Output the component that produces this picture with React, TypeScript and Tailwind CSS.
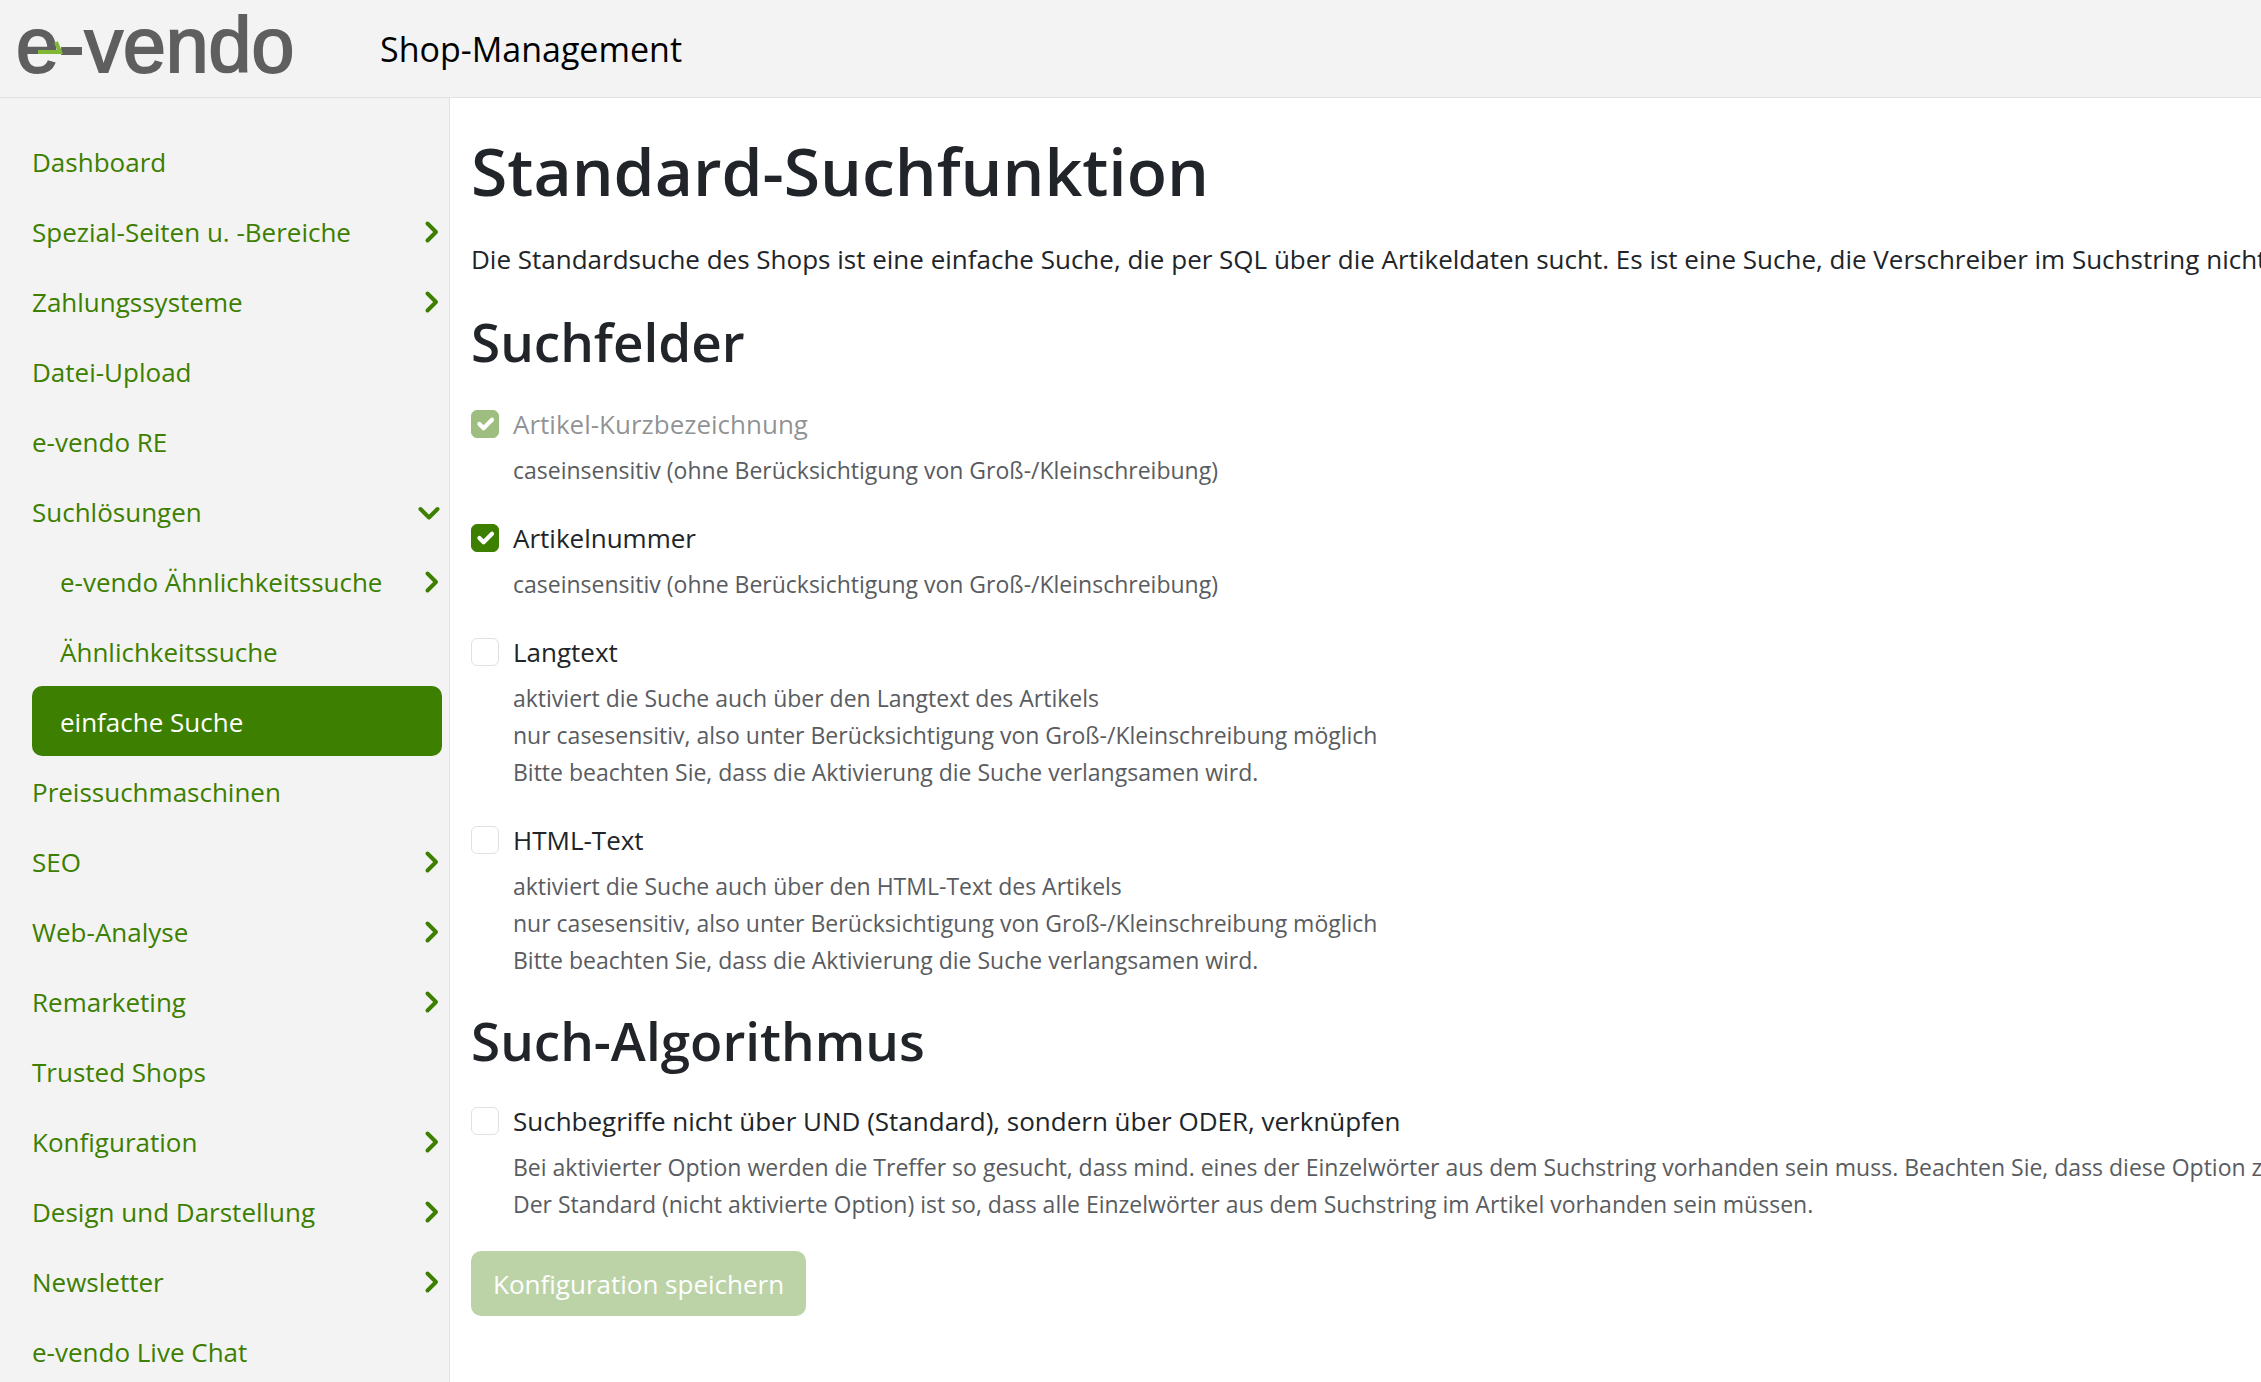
import React, { useState } from "react";

interface NavItem {
  label: string;
  arrow?: "right" | "down";
  sub?: boolean;
  active?: boolean;
}

interface Option {
  id: string;
  label: string;
  help: string[];
  disabled?: boolean;
}

const navItems: NavItem[] = [
  { label: "Dashboard" },
  { label: "Spezial-Seiten u. -Bereiche", arrow: "right" },
  { label: "Zahlungssysteme", arrow: "right" },
  { label: "Datei-Upload" },
  { label: "e-vendo RE" },
  { label: "Suchlösungen", arrow: "down" },
  { label: "e-vendo Ähnlichkeitssuche", arrow: "right", sub: true },
  { label: "Ähnlichkeitssuche", sub: true },
  { label: "einfache Suche", sub: true, active: true },
  { label: "Preissuchmaschinen" },
  { label: "SEO", arrow: "right" },
  { label: "Web-Analyse", arrow: "right" },
  { label: "Remarketing", arrow: "right" },
  { label: "Trusted Shops" },
  { label: "Konfiguration", arrow: "right" },
  { label: "Design und Darstellung", arrow: "right" },
  { label: "Newsletter", arrow: "right" },
  { label: "e-vendo Live Chat" },
];

const searchFields: Option[] = [
  {
    id: "short-name",
    label: "Artikel-Kurzbezeichnung",
    help: ["caseinsensitiv (ohne Berücksichtigung von Groß-/Kleinschreibung)"],
    disabled: true,
  },
  {
    id: "article-number",
    label: "Artikelnummer",
    help: ["caseinsensitiv (ohne Berücksichtigung von Groß-/Kleinschreibung)"],
  },
  {
    id: "long-text",
    label: "Langtext",
    help: [
      "aktiviert die Suche auch über den Langtext des Artikels",
      "nur casesensitiv, also unter Berücksichtigung von Groß-/Kleinschreibung möglich",
      "Bitte beachten Sie, dass die Aktivierung die Suche verlangsamen wird.",
    ],
  },
  {
    id: "html-text",
    label: "HTML-Text",
    help: [
      "aktiviert die Suche auch über den HTML-Text des Artikels",
      "nur casesensitiv, also unter Berücksichtigung von Groß-/Kleinschreibung möglich",
      "Bitte beachten Sie, dass die Aktivierung die Suche verlangsamen wird.",
    ],
  },
];

const orOption: Option = {
  id: "or-search",
  label: "Suchbegriffe nicht über UND (Standard), sondern über ODER, verknüpfen",
  help: [
    "Bei aktivierter Option werden die Treffer so gesucht, dass mind. eines der Einzelwörter aus dem Suchstring vorhanden sein muss. Beachten Sie, dass diese Option zu mehr Treffern führt.",
    "Der Standard (nicht aktivierte Option) ist so, dass alle Einzelwörter aus dem Suchstring im Artikel vorhanden sein müssen.",
  ],
};

function Logo() {
  return (
    <a href="#" aria-label="e-vendo" className="block">
      <svg viewBox="0 0 280 56" className="h-14 w-[280px] overflow-visible">
        <text
          x="-2"
          y="51"
          fontFamily="'Liberation Sans', sans-serif"
          fontSize="77"
          fill="#5f5f5f"
          stroke="#5f5f5f"
          strokeWidth="2"
        >
          e-vendo
        </text>
        <path d="M20 31H42L38 21" fill="none" stroke="#7fb832" strokeWidth="4" />
      </svg>
    </a>
  );
}

function Arrow({ direction }: { direction: "right" | "down" }) {
  return (
    <svg
      viewBox="0 0 24 24"
      className="size-6 shrink-0"
      fill="none"
      stroke="currentColor"
      strokeWidth="4"
      strokeLinecap="round"
      strokeLinejoin="round"
    >
      {direction === "right" ? (
        <path d="M9.500 3.500L18 12L9.500 20.500" />
      ) : (
        <path d="M2.500 9L11 17.500L19.500 9" />
      )}
    </svg>
  );
}

function CheckOption({
  option,
  checked,
  onToggle,
}: {
  option: Option;
  checked: boolean;
  onToggle: () => void;
}) {
  return (
    <div className="grid grid-cols-[28px_1fr] gap-x-3.5">
      <div className="mt-[7px] grid size-7">
        <input
          id={option.id}
          type="checkbox"
          checked={checked}
          disabled={option.disabled}
          onChange={onToggle}
          aria-describedby={`${option.id}-help`}
          className="peer col-start-1 row-start-1 size-7 appearance-none rounded-md border border-[#dee2e6] bg-white checked:border-[#3d7f00] checked:bg-[#3d7f00] disabled:opacity-50"
        />
        <svg
          viewBox="0 0 20 20"
          className="pointer-events-none invisible relative col-start-1 row-start-1 size-7 peer-checked:visible"
          fill="none"
          stroke="#fff"
          strokeWidth="3"
          strokeLinecap="round"
          strokeLinejoin="round"
        >
          <path d="M6 10l3 3l6-6" />
        </svg>
      </div>
      <label
        htmlFor={option.id}
        className={option.disabled ? "text-[#212529]/50" : ""}
      >
        {option.label}
      </label>
      <div
        id={`${option.id}-help`}
        className="col-start-2 mt-[7px] text-[23px] leading-[37px] text-[#595c5f]"
      >
        {option.help.map((line) => (
          <p key={line}>{line}</p>
        ))}
      </div>
    </div>
  );
}

export default function App() {
  const [checked, setChecked] = useState<Record<string, boolean>>({
    "short-name": true,
    "article-number": true,
  });

  const toggle = (id: string) => {
    setChecked((prev) => ({ ...prev, [id]: !prev[id] }));
  };

  return (
    <div className="flex h-screen flex-col overflow-hidden bg-white font-['Open_Sans',sans-serif] text-[26px] leading-[42px] text-[#212529]">
      {/* Header */}
      <header className="flex h-[98px] shrink-0 items-center border-b border-[#dee2e6] bg-[#f3f3f3] pl-[18px]">
        <Logo />
        <span className="ml-[82px] text-[34px] text-black">
          Shop-Management
        </span>
      </header>

      <div className="flex min-h-0 grow">
        {/* Sidebar */}
        <nav className="w-[450px] shrink-0 overflow-hidden border-r border-[#dee2e6] bg-[#f3f3f3] pt-7 pr-[7px] pl-8">
          <ul>
            {navItems.map((item) => (
              <li key={item.label}>
                <a
                  href="#"
                  className={`flex h-[70px] items-center justify-between rounded-[10px] pt-0.5 whitespace-nowrap ${
                    item.sub ? "pl-7" : ""
                  } ${item.active ? "bg-[#3d7f00] text-white" : "text-[#3d7f00]"}`}
                >
                  {item.label}
                  {item.arrow && <Arrow direction={item.arrow} />}
                </a>
              </li>
            ))}
          </ul>
        </nav>

        {/* Content */}
        <main className="min-w-0 grow overflow-hidden pt-[30px] pl-[21px] whitespace-nowrap">
          <h1 className="mb-[26px] text-[66px] leading-[84px] font-semibold">
            Standard-Suchfunktion
          </h1>
          <p className="mb-7">
            Die Standardsuche des Shops ist eine einfache Suche, die per SQL
            über die Artikeldaten sucht. Es ist eine Suche, die Verschreiber im
            Suchstring nicht berücksichtigt.
          </p>

          <h2 className="mb-7 text-[53px] leading-[67px] font-semibold">
            Suchfelder
          </h2>
          <div className="mb-7 flex flex-col gap-7">
            {searchFields.map((option) => (
              <CheckOption
                key={option.id}
                option={option}
                checked={!!checked[option.id]}
                onToggle={() => toggle(option.id)}
              />
            ))}
          </div>

          <h2 className="mb-[26px] text-[53px] leading-[67px] font-semibold">
            Such-Algorithmus
          </h2>
          <CheckOption
            option={orOption}
            checked={!!checked[orOption.id]}
            onToggle={() => toggle(orOption.id)}
          />

          <button
            type="button"
            disabled
            className="mt-7 h-[65px] rounded-[10px] bg-[#bcd3a7] px-[22px] text-white"
          >
            Konfiguration speichern
          </button>
        </main>
      </div>
    </div>
  );
}
